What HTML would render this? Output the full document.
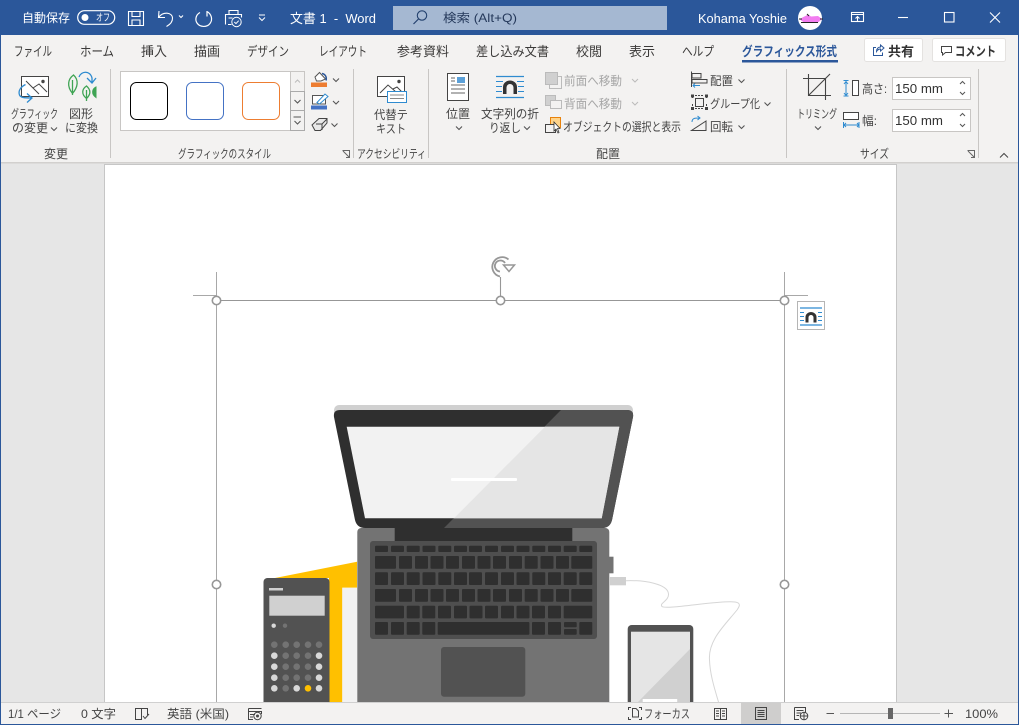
<!DOCTYPE html>
<html lang="ja"><head><meta charset="utf-8"><title>Word</title>
<style>
html,body{margin:0;padding:0;background:#e6e6e6;width:1019px;height:725px;overflow:hidden}
svg{display:block}
text{font-family:"Liberation Sans","Noto Sans CJK JP",sans-serif;font-size:12px;fill:#444}
.w{fill:#fff}.tab{font-size:13px;fill:#3b3a39}.g{fill:#a6a6a6}
</style></head><body>
<svg width="1019" height="725" viewBox="0 0 1019 725" xmlns="http://www.w3.org/2000/svg">
<defs><path id="c" d="M-3-1.500 0 1.500 3-1.500" fill="none" stroke="#555" stroke-width="1.100"/></defs>
<rect width="1019" height="725" fill="#e6e6e6"/>
<!-- page -->
<rect x="104.500" y="164.500" width="792" height="560" fill="#fff" stroke="#c6c6c6"/>
<!-- illustration -->
<rect x="334" y="405" width="299" height="12" rx="5" fill="#d0d0d0"/>
<path d="M340 410H627Q634 410 633 417L612 520Q610 528 602 528H365Q357 528 355 520L334 417Q333 410 340 410Z" fill="#2f2f2f"/>
<path d="M561 410H627Q634 410 633 417L612 520Q610 528 602 528H444Z" fill="#525252"/>
<path d="M346.700 426.700H619.300L601.700 518.300H365Z" fill="#f2f2f2"/>
<path d="M545 426.700H619.300L601.700 518.300H454Z" fill="#e5e5e5"/>
<rect x="451" y="478" width="66" height="3" rx="1" fill="#fff"/>
<path d="M275 578 357 561.700V587.700H342.300V702H329V578Z" fill="#ffc000"/>
<rect x="342.300" y="587.700" width="15" height="115" fill="#f2f2f2"/>
<rect x="263.500" y="578" width="66" height="130" rx="4" fill="#525252"/>
<rect x="269" y="588" width="14" height="2.500" fill="#d0d0d0"/>
<rect x="269.300" y="595.700" width="55.400" height="20" fill="#d0d0d0"/>
<circle cx="273.700" cy="625.700" r="2.200" fill="#d8d8d8"/><circle cx="285" cy="625.700" r="2.200" fill="#737373"/>
<g fill="#737373"><circle cx="274.300" cy="644.700" r="3.300"/><circle cx="285.700" cy="644.700" r="3.300"/><circle cx="296.700" cy="644.700" r="3.300"/><circle cx="308" cy="644.700" r="3.300"/><circle cx="319" cy="644.700" r="3.300"/>
<circle cx="285.700" cy="655.700" r="3.300"/><circle cx="296.700" cy="655.700" r="3.300"/><circle cx="308" cy="655.700" r="3.300"/>
<circle cx="285.700" cy="666.700" r="3.300"/><circle cx="296.700" cy="666.700" r="3.300"/><circle cx="308" cy="666.700" r="3.300"/>
<circle cx="285.700" cy="677.700" r="3.300"/><circle cx="296.700" cy="677.700" r="3.300"/><circle cx="308" cy="677.700" r="3.300"/>
<circle cx="285.700" cy="688.300" r="3.300"/></g>
<g fill="#d8d8d8"><circle cx="274.300" cy="655.700" r="3.300"/><circle cx="319" cy="655.700" r="3.300"/><circle cx="274.300" cy="666.700" r="3.300"/><circle cx="319" cy="666.700" r="3.300"/><circle cx="274.300" cy="677.700" r="3.300"/><circle cx="319" cy="677.700" r="3.300"/><circle cx="274.300" cy="688.300" r="3.300"/><circle cx="296.700" cy="688.300" r="3.300"/><circle cx="319" cy="688.300" r="3.300"/></g>
<circle cx="308" cy="688.300" r="3.300" fill="#ffc000"/>
<rect x="357.300" y="528" width="252" height="180" rx="4" fill="#737373"/>
<rect x="394.700" y="528" width="177.600" height="13" fill="#2f2f2f"/>
<rect x="609" y="556.700" width="4.500" height="16.600" fill="#737373"/>
<rect x="609" y="577" width="17" height="8.300" fill="#d0d0d0"/>
<path d="M626 580.700C645 580 668 584 668.500 594C669 601 659 603 662 606.500C666 610 720 600 735 602C742 603 739 607 737 610C725 625 708 640 709.500 660C710 675 715 690 718.500 702" fill="none" stroke="#d6d6d6" stroke-width="1"/>
<rect x="370" y="541" width="227" height="98" rx="3" fill="#4f4f4f"/>
<g fill="#2f2f2f">
<g><rect x="375" y="545.700" width="13" height="6.300" rx="1"/><rect x="391" y="545.700" width="13" height="6.300" rx="1"/><rect x="406.700" y="545.700" width="13" height="6.300" rx="1"/><rect x="422.500" y="545.700" width="13" height="6.300" rx="1"/><rect x="438.300" y="545.700" width="13" height="6.300" rx="1"/><rect x="454" y="545.700" width="13" height="6.300" rx="1"/><rect x="469" y="545.700" width="13" height="6.300" rx="1"/><rect x="485" y="545.700" width="13" height="6.300" rx="1"/><rect x="501" y="545.700" width="13" height="6.300" rx="1"/><rect x="516.500" y="545.700" width="13" height="6.300" rx="1"/><rect x="532.300" y="545.700" width="13" height="6.300" rx="1"/><rect x="548" y="545.700" width="13" height="6.300" rx="1"/><rect x="563.700" y="545.700" width="13" height="6.300" rx="1"/><rect x="579.300" y="545.700" width="13" height="6.300" rx="1"/></g>
<g id="r2"><rect x="375" y="556" width="21" height="12.700" rx="1"/><rect x="399" y="556" width="13" height="12.700" rx="1"/><rect x="415" y="556" width="13" height="12.700" rx="1"/><rect x="430.500" y="556" width="13" height="12.700" rx="1"/><rect x="446" y="556" width="13" height="12.700" rx="1"/><rect x="462" y="556" width="13" height="12.700" rx="1"/><rect x="477.500" y="556" width="13" height="12.700" rx="1"/><rect x="493" y="556" width="13" height="12.700" rx="1"/><rect x="509" y="556" width="13" height="12.700" rx="1"/><rect x="524.700" y="556" width="13" height="12.700" rx="1"/><rect x="540.500" y="556" width="13" height="12.700" rx="1"/><rect x="556" y="556" width="13" height="12.700" rx="1"/><rect x="571.300" y="556" width="21" height="12.700" rx="1"/></g>
<use href="#r2" y="33"/>
<g><rect x="375" y="572.300" width="13" height="12.700" rx="1"/><rect x="391" y="572.300" width="13" height="12.700" rx="1"/><rect x="406.700" y="572.300" width="13" height="12.700" rx="1"/><rect x="422.500" y="572.300" width="13" height="12.700" rx="1"/><rect x="438.300" y="572.300" width="13" height="12.700" rx="1"/><rect x="454" y="572.300" width="13" height="12.700" rx="1"/><rect x="469" y="572.300" width="13" height="12.700" rx="1"/><rect x="485" y="572.300" width="13" height="12.700" rx="1"/><rect x="501" y="572.300" width="13" height="12.700" rx="1"/><rect x="516.500" y="572.300" width="13" height="12.700" rx="1"/><rect x="532.300" y="572.300" width="13" height="12.700" rx="1"/><rect x="548" y="572.300" width="13" height="12.700" rx="1"/><rect x="563.700" y="572.300" width="13" height="12.700" rx="1"/><rect x="579.300" y="572.300" width="13" height="12.700" rx="1"/></g>
<g><rect x="375" y="605.700" width="29" height="12.700" rx="1"/><rect x="406.700" y="605.700" width="13" height="12.700" rx="1"/><rect x="422.300" y="605.700" width="13" height="12.700" rx="1"/><rect x="438" y="605.700" width="13" height="12.700" rx="1"/><rect x="454" y="605.700" width="13" height="12.700" rx="1"/><rect x="469.500" y="605.700" width="13" height="12.700" rx="1"/><rect x="485" y="605.700" width="13" height="12.700" rx="1"/><rect x="501" y="605.700" width="13" height="12.700" rx="1"/><rect x="516.500" y="605.700" width="13" height="12.700" rx="1"/><rect x="532" y="605.700" width="13" height="12.700" rx="1"/><rect x="548" y="605.700" width="13" height="12.700" rx="1"/><rect x="563.700" y="605.700" width="28.600" height="12.700" rx="1"/></g>
<g><rect x="375" y="622" width="13" height="12.700" rx="1"/><rect x="391" y="622" width="13" height="12.700" rx="1"/><rect x="406.700" y="622" width="13" height="12.700" rx="1"/><rect x="422.300" y="622" width="13" height="12.700" rx="1"/><rect x="437.700" y="622" width="91.700" height="12.700" rx="1"/><rect x="532" y="622" width="13" height="12.700" rx="1"/><rect x="548" y="622" width="13" height="12.700" rx="1"/><rect x="564" y="622" width="12.700" height="5.300" rx="1"/><rect x="564" y="629" width="12.700" height="5.700" rx="1"/><rect x="579.300" y="622" width="13" height="12.700" rx="1"/></g>
</g>
<rect x="441" y="647" width="84.300" height="49.700" rx="3" fill="#525252"/>
<rect x="627.700" y="625" width="65.600" height="90" rx="4" fill="#525252"/>
<rect x="631" y="631.700" width="59" height="75" fill="#e5e5e5"/>
<path d="M690 649V707H633Z" fill="#d0d0d0"/>
<rect x="642.700" y="699" width="34.500" height="5" fill="#fff"/>
<!-- selection -->
<g fill="none" stroke="#979797">
<path d="M216.500 272V702M784.500 272V702M193 295.500H217M784 295.500H808" stroke="#a8a8a8"/>
<path d="M216 300.500H784M500.500 277V300" stroke-width="1.100"/>
<g stroke-width="1.600" fill="#fff"><circle cx="216.500" cy="300.500" r="4.200"/><circle cx="500.500" cy="300.500" r="4.200"/><circle cx="784.500" cy="300.500" r="4.200"/><circle cx="216.500" cy="584.500" r="4.200"/><circle cx="784.500" cy="584.500" r="4.200"/></g>
<path d="M508.500 259.500A9.800 9.800 0 1 0 500 276.500" stroke-width="1.800"/>
<path d="M505 263A5.500 5.500 0 1 0 500 271.500" stroke-width="1.800"/>
<path d="M503.500 265H514.500L509 271.500Z" fill="#fff" stroke-width="1.500"/>
</g>
<rect x="797.500" y="301.500" width="27" height="28" fill="#fff" stroke="#b5b5b5"/>
<path d="M800 308H822M800 325H822" stroke="#2e8bd0" stroke-width="1.200"/>
<path d="M800 312.500H804M818 312.500H822M800 316.500H804M818 316.500H822M800 320.500H804M818 320.500H822" stroke="#2e8bd0"/>
<path d="M805.500 322.500V317A5.500 5 0 0 1 816.500 317V322.500H813.500V317.500A2.500 2.500 0 0 0 808.500 317.500V322.500Z" fill="#333"/>
<!-- title bar -->
<rect width="1019" height="35" fill="#2b579a"/>
<text class="w" x="22" y="22" textLength="48" lengthAdjust="spacingAndGlyphs">自動保存</text>
<rect x="77.700" y="10.700" width="37" height="13.600" rx="6.800" fill="none" stroke="#fff" stroke-width="1.200"/>
<circle cx="85" cy="17.500" r="3.500" fill="#fff"/>
<text class="w" x="96" y="21" style="font-size:10px" textLength="14" lengthAdjust="spacingAndGlyphs">オフ</text>
<g fill="none" stroke="#fff" stroke-width="1.100">
<path d="M128.500 11.500H143.500V25.500H128.500ZM132 11.500V16.500H140V11.500M132 25.500V20H140V25.500"/>
<path d="M159 11 158.500 17.500 165 17.500M159 17C163 11.500 172 12 172.500 18C172.700 21.500 170 24.500 166.500 26.500"/>
<path d="M179 15.500 181 17.500 183 15.500"/>
<path d="M200 12.500C195.500 15 195 20 197 23C200 27.500 207 27.500 210 23.500C213 19.500 211.500 14 207 11.500M207 11V16.500" stroke-width="1.200"/>
<path d="M229 14V10.500H238V14M225.500 24.500V14.500H241.500V17.500M228 24.500H231.500M228.500 18H232.500"/>
</g>
<circle cx="236.500" cy="22" r="4.700" fill="#2b579a" stroke="#fff"/><path d="M234.300 22 236 23.600 238.700 20.700" fill="none" stroke="#fff"/>
<path d="M259 15H265M259 17.500 262 20.500 265 17.500" fill="none" stroke="#fff"/>
<text class="w" x="290" y="23" style="font-size:13px" textLength="86" lengthAdjust="spacingAndGlyphs">文書 1&#160;&#160;-&#160;&#160;Word</text>
<rect x="393" y="6" width="274" height="24" fill="#a5b8d2"/>
<circle cx="422" cy="15.500" r="4.700" fill="none" stroke="#24426f" stroke-width="1.100"/><path d="M418.500 19 413.500 24" stroke="#24426f" stroke-width="1.200"/>
<text x="443" y="22" style="fill:#24385a" textLength="74" lengthAdjust="spacingAndGlyphs">検索 (Alt+Q)</text>
<text class="w" x="698" y="23" style="font-size:13px" textLength="89" lengthAdjust="spacingAndGlyphs">Kohama Yoshie</text>
<circle cx="810" cy="18" r="12" fill="#fff"/>
<path d="M800 19.500C803 16.500 806 16 808 14.500L811 16.500 818 16 822 19 818 22.500H804Z" fill="#f27cf0"/><path d="M799 19H802M807 14 809 16M820 19H823M801 22.500H818" stroke="#222" fill="none"/>
<g fill="none" stroke="#fff" stroke-width="1.100"><rect x="851.500" y="12.500" width="12" height="9"/><path d="M851.500 14.500H863.500M857.500 21V16.500M855.500 18.500 857.500 16.500 859.500 18.500"/>
<path d="M898 17.500H908"/><rect x="944.500" y="12.500" width="9.500" height="9.500"/><path d="M990 12.500 1000 22.500M1000 12.500 990 22.500"/></g>
<!-- ribbon -->
<rect x="1" y="35" width="1017" height="127" fill="#f3f2f1"/>
<rect x="1" y="162" width="1017" height="1.500" fill="#d2d0ce"/>
<rect x="0" y="35" width="1" height="690" fill="#2b579a"/><rect x="1018" y="35" width="1" height="690" fill="#2b579a"/>
<text class="tab" x="14" y="56" textLength="38" lengthAdjust="spacingAndGlyphs">ファイル</text>
<text class="tab" x="80" y="56" textLength="34" lengthAdjust="spacingAndGlyphs">ホーム</text>
<text class="tab" x="141" y="56" textLength="26" lengthAdjust="spacingAndGlyphs">挿入</text>
<text class="tab" x="194" y="56" textLength="26" lengthAdjust="spacingAndGlyphs">描画</text>
<text class="tab" x="247" y="56" textLength="42" lengthAdjust="spacingAndGlyphs">デザイン</text>
<text class="tab" x="319" y="56" textLength="48" lengthAdjust="spacingAndGlyphs">レイアウト</text>
<text class="tab" x="397" y="56" textLength="52" lengthAdjust="spacingAndGlyphs">参考資料</text>
<text class="tab" x="476" y="56" textLength="73" lengthAdjust="spacingAndGlyphs">差し込み文書</text>
<text class="tab" x="576" y="56" textLength="26" lengthAdjust="spacingAndGlyphs">校閲</text>
<text class="tab" x="629" y="56" textLength="26" lengthAdjust="spacingAndGlyphs">表示</text>
<text class="tab" x="682" y="56" textLength="32" lengthAdjust="spacingAndGlyphs">ヘルプ</text>
<text class="tab" x="742" y="56" style="fill:#2b579a;font-weight:bold" textLength="95" lengthAdjust="spacingAndGlyphs">グラフィックス形式</text>
<rect x="742" y="60" width="96" height="2.500" fill="#2b579a"/>
<rect x="864.500" y="38.500" width="58" height="23" rx="2" fill="#fff" stroke="#e4e2e0"/>
<path d="M876 47.500H873.500V55.500H882.500V52.500M876.500 51.500C876.500 48.500 878.500 47 880.500 47V45L884 48 880.500 51V49C878.500 49 877.500 50 876.500 51.500Z" fill="none" stroke="#2b579a"/>
<text x="888" y="56" style="font-weight:bold;font-size:13px;fill:#333" textLength="26" lengthAdjust="spacingAndGlyphs">共有</text>
<rect x="932.500" y="38.500" width="73" height="23" rx="2" fill="#fff" stroke="#e4e2e0"/>
<path d="M941.500 46.500H951.500V52.500H945.500L942.500 55V52.500H941.500Z" fill="none" stroke="#444"/>
<text x="955" y="56" style="font-weight:bold;font-size:13px;fill:#333" textLength="41" lengthAdjust="spacingAndGlyphs">コメント</text>
<path d="M110.500 69V158M353.500 69V158M428.500 69V158M786.500 69V158M978.500 69V158" stroke="#c8c6c4"/>
<!-- group labels -->
<text x="44" y="158" textLength="24" lengthAdjust="spacingAndGlyphs">変更</text>
<text x="178" y="158" textLength="93" lengthAdjust="spacingAndGlyphs">グラフィックのスタイル</text>
<text x="357" y="158" textLength="69" lengthAdjust="spacingAndGlyphs">アクセシビリティ</text>
<text x="596" y="158" textLength="24" lengthAdjust="spacingAndGlyphs">配置</text>
<text x="860" y="158" textLength="29" lengthAdjust="spacingAndGlyphs">サイズ</text>
<g fill="none" stroke="#666"><path d="M342.500 150.500H349.500V157.500M343 151 349 157M346 157.500H349.500V154"/><path d="M967.500 150.500H974.500V157.500M968 151 974 157M971 157.500H974.500V154"/></g>
<path d="M1000 157.500 1004 153.500 1008 157.500" fill="none" stroke="#444"/>
<!-- change graphic -->
<rect x="21.500" y="76.500" width="27" height="20" fill="#fff" stroke="#444"/>
<path d="M26 81 39 94M33 88 39 84 47 92" fill="none" stroke="#444"/><circle cx="43" cy="81.500" r="1.700" fill="#444"/>
<path d="M25.500 84.500C20.500 87 18 91 19.500 95C20.500 97.500 24 98 31 98M27 93.500 32 98 27 102.500" fill="none" stroke="#2e8bd0" stroke-width="1.300"/>
<text x="11" y="118" textLength="47" lengthAdjust="spacingAndGlyphs">グラフィック</text>
<text x="12" y="132" textLength="36" lengthAdjust="spacingAndGlyphs">の変更</text>
<use href="#c" x="54" y="129"/>
<path d="M73.500 75C68 79 66.500 86 72.500 93.500C78 87 79 80 73.500 75ZM72.500 80V95" fill="none" stroke="#3fa454" stroke-width="1.300"/>
<path d="M86.500 86C82 89 81 94 86.500 98.500C91 94 91 90 86.500 86ZM86.500 90V101" fill="none" stroke="#3fa454" stroke-width="1.300"/>
<path d="M96 87C92 89 91 94 96 97.500Z" fill="#3fa454" stroke="#3fa454"/>
<path d="M79 77C81 71 90 70 92 78V82M87 78 92 83 96 78" fill="none" stroke="#2e8bd0" stroke-width="1.300"/>
<text x="69" y="118" textLength="24" lengthAdjust="spacingAndGlyphs">図形</text>
<text x="65" y="132" textLength="33" lengthAdjust="spacingAndGlyphs">に変換</text>
<!-- gallery -->
<rect x="120.500" y="71.500" width="184" height="59" fill="#fff" stroke="#c8c6c4"/>
<rect x="130.500" y="82.500" width="37" height="37" rx="6" fill="#fff" stroke="#000"/>
<rect x="186.500" y="82.500" width="37" height="37" rx="6" fill="#fff" stroke="#4472c4"/>
<rect x="242.500" y="82.500" width="37" height="37" rx="6" fill="#fff" stroke="#ed7d31"/>
<rect x="290.500" y="71.500" width="14" height="20" fill="#f3f2f1" stroke="#c8c6c4"/>
<rect x="290.500" y="91.500" width="14" height="19" fill="#f3f2f1" stroke="#aaa"/>
<rect x="290.500" y="110.500" width="14" height="20" fill="#f3f2f1" stroke="#aaa"/>
<path d="M295 82.500 297.500 80 300 82.500" fill="none" stroke="#bbb"/>
<use href="#c" x="297.500" y="101.500"/>
<path d="M293.500 117H301M294.500 121 297.500 124 300.500 121" fill="none" stroke="#555"/>
<!-- fill/pen/eraser -->
<path d="M315 77 319.500 72.500 325.500 79 321 81H316.500Z" fill="#fff" stroke="#555"/><path d="M322 73.500C325.500 74 327 77.500 326 80.500" stroke="#2b579a" fill="none" stroke-width="1.500"/>
<rect x="311" y="82.500" width="16" height="4.500" fill="#ed7d31"/>
<use href="#c" x="336" y="80"/>
<rect x="312.500" y="95.500" width="13" height="8.500" fill="#fff" stroke="#555"/><path d="M317 102.500 325 94 328 96.500 319.500 104Z" fill="#fff" stroke="#2e8bd0"/>
<rect x="311" y="105.500" width="16" height="4" fill="#4472c4"/>
<use href="#c" x="336" y="102.500"/>
<path d="M312 125 319 118.500H327V123L320.500 130.500H315Z" fill="#e8e8e8" stroke="#444"/><path d="M316 124H322L327 119M322 124V130" fill="none" stroke="#444"/>
<use href="#c" x="334.500" y="125"/>
<!-- alt text -->
<rect x="377.500" y="76.500" width="27" height="20" fill="#fff" stroke="#444"/>
<path d="M380 93 388 85 396 92M393 89 397 87 402 92" fill="none" stroke="#444"/><circle cx="399" cy="81.500" r="1.700" fill="#444"/>
<rect x="387.500" y="91.500" width="19" height="11" fill="#fff" stroke="#2e8bd0"/><path d="M390 95H404M390 98.500H404" stroke="#888"/>
<text x="374" y="119" textLength="34" lengthAdjust="spacingAndGlyphs">代替テ</text>
<text x="376" y="133" textLength="30" lengthAdjust="spacingAndGlyphs">キスト</text>
<!-- position -->
<rect x="447.500" y="73.500" width="21" height="27" fill="#fff" stroke="#444"/>
<rect x="457" y="77" width="8" height="6" fill="#5ba0d8"/>
<path d="M451 78H455M451 81H455M451 85H465M451 89H465M451 93H465" stroke="#666"/>
<text x="446" y="118" textLength="24" lengthAdjust="spacingAndGlyphs">位置</text>
<use href="#c" x="459" y="128"/>
<!-- wrap -->
<path d="M496 76.500H524M496 97.500H524" stroke="#2e8bd0" stroke-width="1.200"/>
<path d="M496 81.500H503M517 81.500H524M496 86.500H502M518 86.500H524M496 91.500H502M518 91.500H524" stroke="#2e8bd0"/>
<path d="M503 94V87A7 6.500 0 0 1 517 87V94H513.500V87.500A3.500 3.500 0 0 0 506.500 87.500V94Z" fill="#333"/>
<text x="481" y="118" textLength="58" lengthAdjust="spacingAndGlyphs">文字列の折</text>
<text x="489" y="132" textLength="32" lengthAdjust="spacingAndGlyphs">り返し</text>
<use href="#c" x="527" y="128"/>
<!-- forward/back -->
<rect x="545.500" y="72.500" width="12" height="12" fill="#d0d0d0" stroke="#bbb"/><path d="M558 76.500H561.500V88.500H549.500V85" fill="none" stroke="#bbb"/>
<text class="g" x="564" y="85" textLength="58" lengthAdjust="spacingAndGlyphs">前面へ移動</text>
<path d="M632 79 635 82 638 79" fill="none" stroke="#bbb"/>
<rect x="545.500" y="95.500" width="10" height="10" fill="#d0d0d0" stroke="#bbb"/><rect x="550.500" y="100.500" width="11" height="8" fill="#f3f2f1" stroke="#bbb"/>
<text class="g" x="564" y="108" textLength="58" lengthAdjust="spacingAndGlyphs">背面へ移動</text>
<path d="M632 102 635 105 638 102" fill="none" stroke="#bbb"/>
<rect x="550.500" y="117.500" width="10" height="10" fill="#ffd48a" stroke="#e8820c"/>
<rect x="545.500" y="124.500" width="10" height="8" fill="#f3f2f1" stroke="#444"/>
<path d="M554 122V131L556 129 558 133 559 132.500 557.500 128.500H560Z" fill="#fff" stroke="#333" stroke-width=".8"/>
<text x="563" y="131" textLength="118" lengthAdjust="spacingAndGlyphs">オブジェクトの選択と表示</text>
<!-- align -->
<path d="M691.500 71.500V87" stroke="#444" fill="none"/><rect x="692" y="73.500" width="9" height="4.500" fill="none" stroke="#444"/><rect x="692" y="79.500" width="15" height="3.500" fill="#f3f2f1" stroke="#444"/>
<path d="M693 85.500H700M695 83.500 693 85.500 695 87.500" stroke="#2e8bd0" fill="none"/>
<text x="710" y="85" textLength="23" lengthAdjust="spacingAndGlyphs">配置</text>
<use href="#c" x="741.500" y="81"/>
<rect x="695.500" y="98.500" width="8" height="8" fill="none" stroke="#444"/>
<path d="M692.500 96V99M692.500 104V108M706.500 96V99M706.500 104V108M695 95.500H704M695 108.500H704" stroke="#444" stroke-dasharray="2 1" fill="none"/><rect x="691" y="94.500" width="3" height="3" fill="#444"/><rect x="691" y="107" width="3" height="3" fill="#444"/><rect x="705" y="107" width="3" height="3" fill="#444"/><rect x="705" y="94.500" width="3" height="3" fill="#444"/>
<text x="710" y="108" textLength="50" lengthAdjust="spacingAndGlyphs">グループ化</text>
<use href="#c" x="767.500" y="104"/>
<path d="M691.500 130.500H706V121L691.500 130.500Z" fill="none" stroke="#444"/><path d="M692 122C692 118 695 118 700 118M697.500 116 700 118 697.500 120" fill="none" stroke="#2e8bd0"/>
<text x="710" y="131" textLength="23" lengthAdjust="spacingAndGlyphs">回転</text>
<use href="#c" x="741.500" y="127"/>
<!-- crop -->
<path d="M803 78.500H825.500V100M808.500 74V95.500H831M808.500 95.500 830 74" fill="none" stroke="#444" stroke-width="1.100"/>
<text x="797" y="118" textLength="40" lengthAdjust="spacingAndGlyphs">トリミング</text>
<use href="#c" x="818" y="128"/>
<!-- size -->
<rect x="852.500" y="80.500" width="6" height="15" fill="#fff" stroke="#444"/>
<path d="M846 82V95M844 84 846 81.500 848 84M844 93 846 95.500 848 93M843.500 80.500H848.500M843.500 96H848.500" stroke="#2e8bd0" fill="none"/>
<text x="862" y="93" textLength="25" lengthAdjust="spacingAndGlyphs">高さ:</text>
<rect x="892.500" y="77.500" width="78" height="22" fill="#fff" stroke="#c8c6c4"/>
<text x="895" y="93" style="font-size:13px;fill:#333" textLength="48" lengthAdjust="spacingAndGlyphs">150 mm</text>
<path d="M960 84 962.500 81.500 965 84M960 92 962.500 94.500 965 92" fill="none" stroke="#555"/>
<rect x="843.500" y="112.500" width="15" height="7" fill="#fff" stroke="#444"/>
<path d="M844 125H859M846 123 844 125 846 127M857 123 859 125 857 127M843.500 122V128M859 122V128" stroke="#2e8bd0" fill="none"/>
<text x="862" y="125" textLength="15" lengthAdjust="spacingAndGlyphs">幅:</text>
<rect x="892.500" y="109.500" width="78" height="22" fill="#fff" stroke="#c8c6c4"/>
<text x="895" y="125" style="font-size:13px;fill:#333" textLength="48" lengthAdjust="spacingAndGlyphs">150 mm</text>
<path d="M960 116 962.500 113.500 965 116M960 124 962.500 126.500 965 124" fill="none" stroke="#555"/>
<!-- status -->
<rect x="1" y="702" width="1017" height="22" fill="#f3f2f1"/>
<rect x="1" y="702" width="1017" height="1" fill="#d0d0d0"/>
<rect x="0" y="724" width="1019" height="1" fill="#2b579a"/>
<text x="8" y="718" textLength="53" lengthAdjust="spacingAndGlyphs">1/1 ページ</text>
<text x="81" y="718" textLength="35" lengthAdjust="spacingAndGlyphs">0 文字</text>
<path d="M135.500 708.500H141.500V719.500H135.500ZM141.500 708.500H147.500V715M143 716 145 718.500 149 714" fill="none" stroke="#444"/>
<text x="167" y="718" textLength="62" lengthAdjust="spacingAndGlyphs">英語 (米国)</text>
<path d="M248.500 708.500H261.500M248.500 711.500H261.500V714M248.500 708.500V719.500H253M250 714.500H255M250 717H253" fill="none" stroke="#444"/><circle cx="257.500" cy="716" r="3.700" fill="none" stroke="#444"/><circle cx="257.500" cy="716" r="1.500" fill="#444"/>
<path d="M628.500 710V707.500H631M639 707.500H641.500V710M628.500 717V719.500H631M639 719.500H641.500V717M632.500 717V708.500H636L638.500 711V717Z" fill="none" stroke="#444"/>
<text x="644" y="718" textLength="46" lengthAdjust="spacingAndGlyphs">フォーカス</text>
<path d="M714.500 708.500H720.500V719.500H714.500ZM720.500 708.500H726.500V719.500H720.500ZM716 711H719M716 713.500H719M716 716H719M722 711H725M722 713.500H725M722 716H725" fill="none" stroke="#444"/>
<rect x="741" y="703" width="40" height="21" fill="#cfcecd"/>
<path d="M755.500 707.500H766.500V719.500H755.500ZM757.500 710.500H764.500M757.500 712.500H764.500M757.500 714.500H764.500M757.500 716.500H764.500" fill="none" stroke="#444"/>
<path d="M794.500 707.500H805.500V713M794.500 707.500V719.500H799M796.500 710.500H803.500M796.500 713H801M796.500 715.500H799" fill="none" stroke="#444"/><circle cx="804" cy="716" r="3.800" fill="#f3f2f1" stroke="#444"/><path d="M800 716H808M804 712V720" stroke="#444"/>
<path d="M826.500 713.500H834" stroke="#555"/>
<path d="M840 713.500H940" stroke="#b5b5b5"/>
<rect x="888" y="708" width="5" height="11" fill="#666"/>
<path d="M944.500 713.500H953M948.500 709.500V717.500" stroke="#555"/>
<text x="965" y="718" textLength="33" lengthAdjust="spacingAndGlyphs">100%</text>
</svg>
</body></html>
